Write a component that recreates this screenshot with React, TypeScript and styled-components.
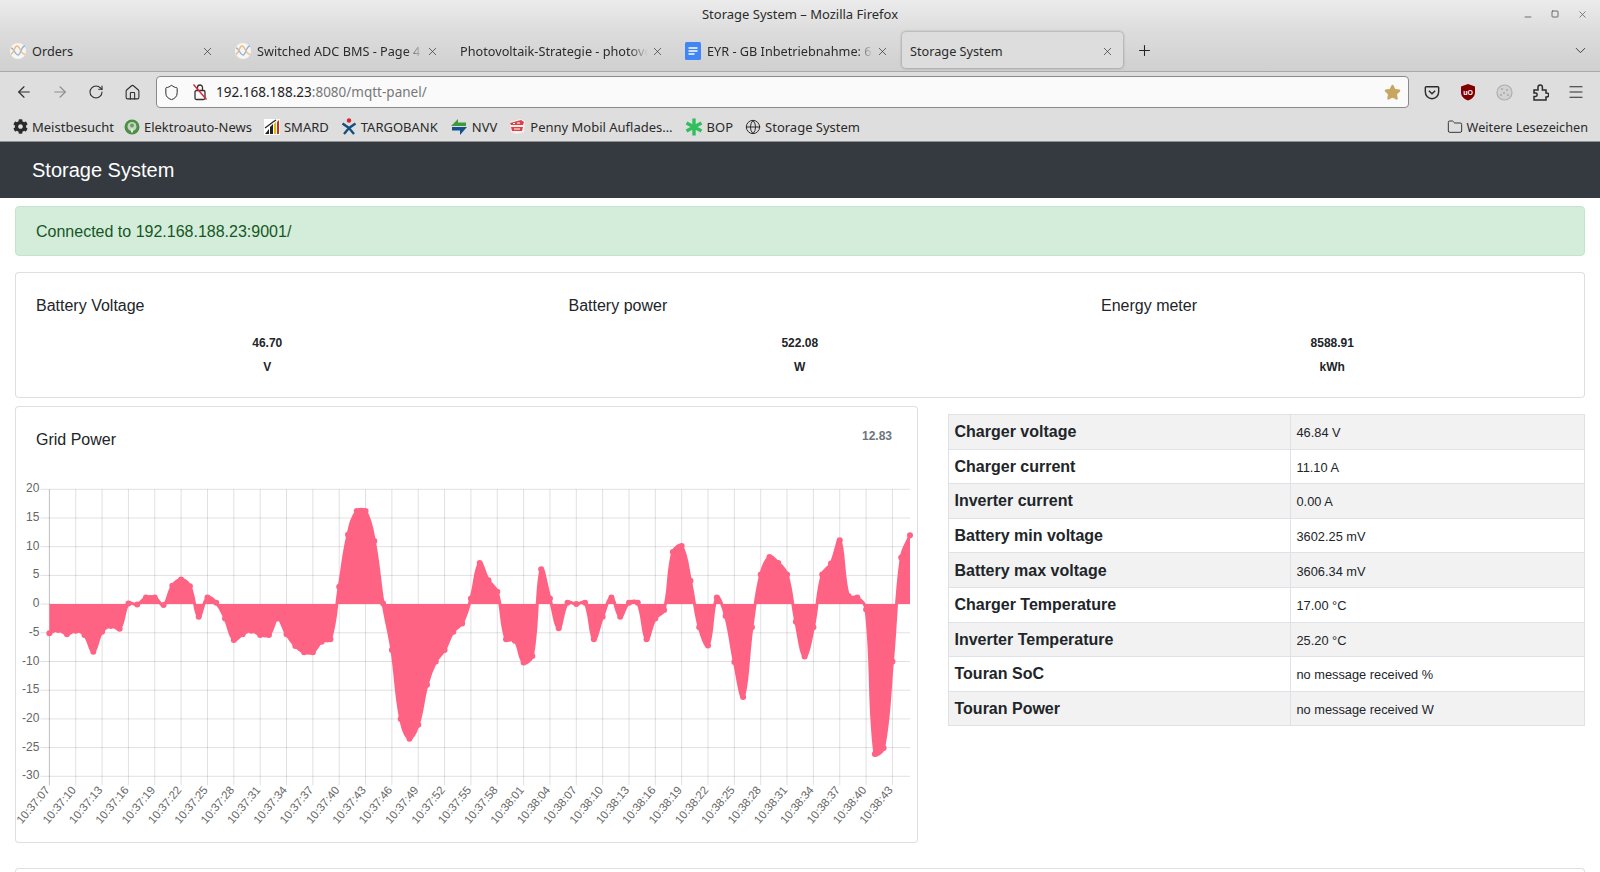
import styled, { createGlobalStyle } from "styled-components";
import {
  ArrowLeft,
  ArrowRight,
  ChevronDown,
  Folder,
  Globe,
  Home,
  Menu,
  Minus,
  Plus,
  RotateCw,
  Shield,
  Square,
  Star,
  X,
} from "lucide-react";
import { FaCog } from "react-icons/fa";

const UI_FONT = `"Noto Sans", "Open Sans", sans-serif`;

const GlobalStyle = createGlobalStyle`
  html, body {
    margin: 0;
    padding: 0;
    height: 872px;
    overflow: hidden;
    background: #fff;
    font-family: "Liberation Sans", Arial, sans-serif;
    color: #212529;
  }
  * { box-sizing: border-box; }
`;

// grid power samples, one per second from 10:37:07
const gridPower = [
  -5.09, -4.51, -5.27, -4.63, -5.38, -8.28, -4.8, -3.82, -4.28, 0.12, -0.06, 1.16, 1.16, -0.17,
  3.18, 4.28, 3.13, -2.2, 1.16, 0.23, -2.49, -6.25, -5.27, -4.63, -5.38, -5.38, -2.49, -5.27,
  -7.29, -8.39, -8.39, -6.54, -6.13, 3.01, 12.09, 16.2, 16.2, 11.0, 0.12, -7.99, -20.02, -23.44,
  -21.0, -14.06, -10.01, -7.99, -4.8, -3.36, 0.98, 7.18, 4.17, 2.14, -6.13, -6.37, -10.19, -9.03,
  6.08, 0.98, -4.22, 0.23, 0, 0.23, -6.13, -2.2, 1.16, -2.2, 0.23, 0.23, -6.13, -2.49, -1.04, 9.09,
  10.13, 4.05, -4.05, -7.23, 1.16, -2.08, -10.07, -16.2, -4.05, 5.15, 8.22, 7.18, 5.15, -3.07,
  -9.14, -4.05, 5.15, 7.06, 11.11, 1.39, 1.16, -0.93, -26.1, -25.06, -10.01, 8.1, 11.98,
];

const CHART_W = 901;
const CHART_H = 372;
const LEFT = 33.4;
const RIGHT = 894;
const TOP = 19.3;
const BOTTOM = 306.3;
const yTicks = [20, 15, 10, 5, 0, -5, -10, -15, -20, -25, -30];

const xAt = (i: number) => LEFT + (i * (RIGHT - LEFT)) / (gridPower.length - 1);
const yAt = (v: number) => TOP + ((20 - v) * (BOTTOM - TOP)) / 50;

function timeLabel(i: number) {
  const total = 37 * 60 + 7 + i;
  const mm = String(Math.floor(total / 60)).padStart(2, "0");
  const ss = String(total % 60).padStart(2, "0");
  return `10:${mm}:${ss}`;
}

// same bezier control points chart.js uses for tension 0.4
function linePath() {
  const pts = gridPower.map((v, i) => ({ x: xAt(i), y: yAt(v) }));
  const ctrl = pts.map((p, i) => {
    const a = pts[Math.max(i - 1, 0)];
    const b = pts[Math.min(i + 1, pts.length - 1)];
    const d1 = Math.hypot(p.x - a.x, p.y - a.y);
    const d2 = Math.hypot(b.x - p.x, b.y - p.y);
    const s = d1 + d2 || 1;
    return {
      inX: p.x - (0.4 * d1 * (b.x - a.x)) / s,
      inY: p.y - (0.4 * d1 * (b.y - a.y)) / s,
      outX: p.x + (0.4 * d2 * (b.x - a.x)) / s,
      outY: p.y + (0.4 * d2 * (b.y - a.y)) / s,
    };
  });
  let d = `M${pts[0].x} ${pts[0].y}`;
  for (let i = 1; i < pts.length; i++) {
    d += ` C${ctrl[i - 1].outX} ${ctrl[i - 1].outY} ${ctrl[i].inX} ${ctrl[i].inY} ${pts[i].x} ${pts[i].y}`;
  }
  return d;
}

function GridChart() {
  const line = linePath();
  const zero = yAt(0);
  const area = `${line} L${RIGHT} ${zero} L${LEFT} ${zero} Z`;
  const xTicks = gridPower.map((_, i) => i).filter((i) => i % 3 === 0 && i < 97);
  return (
    <ChartSvg viewBox={`0 0 ${CHART_W} ${CHART_H}`}>
      {yTicks.map((t) => (
        <g key={t}>
          <line x1={LEFT - 9} x2={RIGHT} y1={yAt(t)} y2={yAt(t)} stroke="rgba(0,0,0,0.12)" />
          <AxisText x={LEFT - 10} y={yAt(t) + 3} textAnchor="end">
            {t}
          </AxisText>
        </g>
      ))}
      {xTicks.map((i) => (
        <g key={i}>
          <line
            x1={xAt(i)}
            x2={xAt(i)}
            y1={TOP}
            y2={BOTTOM + 9}
            stroke={i === 0 ? "rgba(0,0,0,0.25)" : "rgba(0,0,0,0.12)"}
          />
          <TickLabel
            x={xAt(i) + 1}
            y={BOTTOM + 14}
            textAnchor="end"
            transform={`rotate(-50 ${xAt(i) + 1} ${BOTTOM + 14})`}
          >
            {timeLabel(i)}
          </TickLabel>
        </g>
      ))}
      <path d={area} fill="#ff6384" />
      <path d={line} fill="none" stroke="#ff6384" strokeWidth={3} />
      {gridPower.map((v, i) => (
        <circle key={i} cx={xAt(i)} cy={yAt(v)} r={3} fill="#ff6384" />
      ))}
    </ChartSvg>
  );
}

function OrdersIcon() {
  return (
    <svg width="16" height="16" viewBox="0 0 16 16">
      <circle cx="8" cy="8" r="8" fill="#f7f5f0" />
      <path d="M1 5c3 0 4 7 7 7s3-9 7-9" fill="none" stroke="#8fb4dc" strokeWidth="1.3" />
      <path d="M1 11c3 0 3-8 6-8s4 9 8 8" fill="none" stroke="#edb98a" strokeWidth="1.3" />
    </svg>
  );
}

function DocsIcon() {
  return (
    <svg width="16" height="18" viewBox="0 0 16 18">
      <rect width="16" height="18" rx="1.5" fill="#4285f4" />
      <path d="M3.500 6h9M3.500 9h9M3.500 12h6" stroke="#fff" strokeWidth="1.600" />
    </svg>
  );
}

function ElektroIcon() {
  return (
    <svg width="16" height="16" viewBox="0 0 16 16">
      <circle cx="8" cy="8" r="7.5" fill="#4a8f45" />
      <circle cx="8" cy="7.5" r="4.5" fill="#c4d6bd" />
      <circle cx="8" cy="6.5" r="2" fill="#6f9a68" />
      <path d="M7 9.5h2v4H7z" fill="#dcebd6" />
    </svg>
  );
}

function SmardIcon() {
  return (
    <svg width="16" height="16" viewBox="0 0 16 16">
      <rect width="16" height="16" fill="#fff" />
      <path d="M1 15l4-5v5zM6 15V8l3-3v10z" fill="#222" />
      <path d="M10 15V5l2-2v12z" fill="#e8b800" />
      <path d="M13 15V3l2-2v14z" fill="#d62a1e" />
      <path d="M1 9l8-6 3-2" fill="none" stroke="#222" strokeWidth="1.2" />
    </svg>
  );
}

function TargoIcon() {
  return (
    <svg width="16" height="18" viewBox="0 0 16 18">
      <circle cx="8" cy="2.5" r="2.2" fill="#d9232e" />
      <path
        d="M1.5 5.5L8 10l6.500-4.500M3 16l5-6 5 6"
        fill="none"
        stroke="#14507e"
        strokeWidth="2.4"
      />
    </svg>
  );
}

function NvvIcon() {
  return (
    <svg width="18" height="16" viewBox="0 0 18 16">
      <path d="M8 0L1 7h15V3.500H8z" fill="#3f9a3c" />
      <path d="M10 16l7-8H2v3.500h8z" fill="#14508c" />
    </svg>
  );
}

function PennyIcon() {
  return (
    <svg width="17" height="17" viewBox="0 0 17 17">
      <path d="M1 4l10-3 5 2-1 11-7 2-6-2z" fill="#fbeeee" />
      <path d="M1 5l11-3 3 2-1 3H2zM2 9h12l-1 4H3z" fill="#d9444a" />
      <path d="M4 5.500h2M8 5h3M5 11h6" stroke="#fff" strokeWidth="1.100" />
    </svg>
  );
}

function BopIcon() {
  return (
    <svg width="18" height="18" viewBox="0 0 18 18">
      <path d="M9 0.500v17M1.500 5l15 8M16.500 5l-15 8" stroke="#2fbf5b" strokeWidth="3.400" />
    </svg>
  );
}

function LockOffIcon() {
  return (
    <svg width="16" height="18" viewBox="0 0 16 18">
      <rect x="3" y="7.500" width="10" height="9" rx="1.500" fill="none" stroke="#333" strokeWidth="1.300" />
      <path d="M5.500 7.500V4.500a2.500 2.500 0 0 1 5 0v3" fill="none" stroke="#333" strokeWidth="1.300" />
      <path d="M1.500 1.500l13 15" stroke="#e0243a" strokeWidth="1.400" />
    </svg>
  );
}

function PocketIcon() {
  return (
    <svg width="16" height="16" viewBox="0 0 18 18">
      <path
        d="M2.500 3h13a1 1 0 0 1 1 1v5a7.500 7.500 0 0 1-15 0V4a1 1 0 0 1 1-1z"
        fill="none"
        stroke="#2b2b2b"
        strokeWidth="1.600"
      />
      <path d="M5.500 7.500L9 11l3.500-3.500" fill="none" stroke="#2b2b2b" strokeWidth="1.600" />
    </svg>
  );
}

function UblockIcon() {
  return (
    <svg width="18" height="18" viewBox="0 0 18 18">
      <path d="M9 1l7 2.500v6C16 14 12 16.500 9 17.500 6 16.500 2 14 2 9.500v-6z" fill="#800000" />
      <text x="9" y="11.500" textAnchor="middle" fontSize="7" fontWeight="700" fill="#fff" fontFamily="Liberation Sans">
        uO
      </text>
    </svg>
  );
}

function CookieIcon() {
  return (
    <svg width="17" height="17" viewBox="0 0 17 17">
      <circle cx="8.500" cy="8.500" r="7.500" fill="#d2d2d2" stroke="#aeaeae" strokeWidth="1.200" />
      <g fill="#8a8a8a">
        <circle cx="6" cy="5" r="0.800" />
        <circle cx="11" cy="6" r="0.800" />
        <circle cx="8" cy="9" r="0.800" />
        <circle cx="12" cy="11" r="0.800" />
        <circle cx="5" cy="11" r="0.800" />
      </g>
    </svg>
  );
}

function ExtensionsIcon() {
  return (
    <svg width="18" height="18" viewBox="0 0 18 18">
      <path
        d="M3 7h4V4.300a2.200 2.200 0 0 1 4.400 0V7H15v3h.7a2 2 0 0 1 0 4H15v3H3v-3.500h1.500a1.700 1.700 0 0 0 0-3.400H3z"
        fill="none"
        stroke="#2b2b2b"
        strokeWidth="1.500"
      />
    </svg>
  );
}

const tabs = [
  { title: "Orders", icon: <OrdersIcon /> },
  { title: "Switched ADC BMS - Page 4", icon: <OrdersIcon />, fade: true },
  { title: "Photovoltaik-Strategie - photovoltaikforum", fade: true },
  { title: "EYR - GB Inbetriebnahme: 6.4", icon: <DocsIcon />, fade: true },
  { title: "Storage System", active: true },
];

const bookmarks = [
  { title: "Meistbesucht", icon: <FaCog size={15} color="#2b2b2b" /> },
  { title: "Elektroauto-News", icon: <ElektroIcon /> },
  { title: "SMARD", icon: <SmardIcon /> },
  { title: "TARGOBANK", icon: <TargoIcon /> },
  { title: "NVV", icon: <NvvIcon /> },
  { title: "Penny Mobil Auflades…", icon: <PennyIcon /> },
  { title: "BOP", icon: <BopIcon /> },
  { title: "Storage System", icon: <Globe size={16} strokeWidth={1.5} color="#2b2b2b" /> },
];

const stats = [
  { title: "Battery Voltage", value: "46.70", unit: "V" },
  { title: "Battery power", value: "522.08", unit: "W" },
  { title: "Energy meter", value: "8588.91", unit: "kWh" },
];

const readings = [
  ["Charger voltage", "46.84 V"],
  ["Charger current", "11.10 A"],
  ["Inverter current", "0.00 A"],
  ["Battery min voltage", "3602.25 mV"],
  ["Battery max voltage", "3606.34 mV"],
  ["Charger Temperature", "17.00 °C"],
  ["Inverter Temperature", "25.20 °C"],
  ["Touran SoC", "no message received %"],
  ["Touran Power", "no message received W"],
];

export default function App() {
  return (
    <Page>
      <GlobalStyle />
      <Browser>
        <TitleBar>
          <span />
          <WindowTitle>Storage System – Mozilla Firefox</WindowTitle>
          <WindowButtons>
            <Minus size={10} strokeWidth={2} />
            <Square size={8} strokeWidth={2.5} />
            <X size={11} strokeWidth={1.5} />
          </WindowButtons>
        </TitleBar>
        <TabStrip>
          {tabs.map((t) => (
            <Tab key={t.title} $active={t.active}>
              {t.icon}
              <TabTitle $fade={t.fade}>{t.title}</TabTitle>
              <X size={13} strokeWidth={1.3} color="#333" />
            </Tab>
          ))}
          <NewTab>
            <Plus size={17} strokeWidth={1.5} color="#222" />
          </NewTab>
          <TabList>
            <ChevronDown size={17} strokeWidth={1.3} color="#333" />
          </TabList>
        </TabStrip>
        <NavBar>
          <ToolButton>
            <ArrowLeft size={18} strokeWidth={1.5} />
          </ToolButton>
          <ToolButton $muted>
            <ArrowRight size={18} strokeWidth={1.5} />
          </ToolButton>
          <ToolButton>
            <RotateCw size={16} strokeWidth={1.6} />
          </ToolButton>
          <ToolButton>
            <Home size={17} strokeWidth={1.5} />
          </ToolButton>
          <UrlBar>
            <Shield size={17} strokeWidth={1.4} color="#2b2b2b" />
            <LockOffIcon />
            <UrlText>
              192.168.188.23<UrlRest>:8080/mqtt-panel/</UrlRest>
            </UrlText>
            <Star size={17} fill="#c8a662" color="#c8a662" />
          </UrlBar>
          <ToolButton>
            <PocketIcon />
          </ToolButton>
          <ToolButton>
            <UblockIcon />
          </ToolButton>
          <ToolButton>
            <CookieIcon />
          </ToolButton>
          <ToolButton>
            <ExtensionsIcon />
          </ToolButton>
          <ToolButton>
            <Menu size={18} strokeWidth={1.5} />
          </ToolButton>
        </NavBar>
        <BookmarkBar>
          {bookmarks.map((b) => (
            <Bookmark key={b.title}>
              {b.icon}
              <span>{b.title}</span>
            </Bookmark>
          ))}
          <MoreBookmarks>
            <Folder size={16} strokeWidth={1.4} color="#2b2b2b" />
            <span>Weitere Lesezeichen</span>
          </MoreBookmarks>
        </BookmarkBar>
      </Browser>

      <Navbar>Storage System</Navbar>
      <Content>
        <Alert>Connected to 192.168.188.23:9001/</Alert>
        <StatCard>
          <StatRow>
            {stats.map((s) => (
              <StatCol key={s.title}>
                <CardTitle>{s.title}</CardTitle>
                <StatValue>{s.value}</StatValue>
                <StatValue>{s.unit}</StatValue>
              </StatCol>
            ))}
          </StatRow>
        </StatCard>
        <Columns>
          <ChartCard>
            <ChartHead>
              <CardTitle>Grid Power</CardTitle>
              <Latest>12.83</Latest>
            </ChartHead>
            <GridChart />
          </ChartCard>
          <Readings>
            <tbody>
              {readings.map(([name, value]) => (
                <tr key={name}>
                  <th>{name}</th>
                  <td>{value}</td>
                </tr>
              ))}
            </tbody>
          </Readings>
        </Columns>
        <NextCard />
      </Content>
    </Page>
  );
}

const Page = styled.div`
  width: 1600px;
  height: 872px;
  overflow: hidden;
`;

const Browser = styled.header`
  height: 142px;
  background: #dedede;
  border-bottom: 1px solid #8f8f8f;
  font-family: ${UI_FONT};
  font-size: 13px;
  color: #2b2b2b;
`;

const TitleBar = styled.div`
  height: 32px;
  display: grid;
  grid-template-columns: 1fr auto 1fr;
  align-items: center;
  background: linear-gradient(#ececec, #dcdcdc);
`;

const WindowTitle = styled.div`
  font-size: 13px;
  padding-bottom: 5px;
`;

const WindowButtons = styled.div`
  display: flex;
  justify-content: flex-end;
  align-items: center;
  gap: 18px;
  padding-right: 12px;
  padding-bottom: 4px;
  color: #555;

  svg:first-child { margin-top: 6px; }
`;

const TabStrip = styled.div`
  height: 40px;
  display: flex;
  align-items: flex-start;
  padding-left: 2px;
  background: linear-gradient(#dcdcdc, #d0d0d0);
  border-bottom: 1px solid #a9a9a9;
`;

const Tab = styled.div<{ $active?: boolean }>`
  width: 221px;
  height: 36px;
  margin-right: 4px;
  padding: 2px 9px 0 8px;
  display: flex;
  align-items: center;
  gap: 6px;
  border-radius: 4px;
  font-size: 12.700px;
  background: ${(p) => (p.$active ? "#dddddd" : "transparent")};
  box-shadow: ${(p) => (p.$active ? "0 0 3px rgba(0,0,0,0.4)" : "none")};
  svg { flex: none; }
  svg:last-child { margin-left: -3px; }
`;

const TabTitle = styled.span<{ $fade?: boolean }>`
  flex: 1;
  min-width: 0;
  white-space: nowrap;
  overflow: hidden;
  mask-image: ${(p) => (p.$fade ? "linear-gradient(to right, #000 90%, transparent)" : "none")};
`;

const NewTab = styled.div`
  width: 28px;
  height: 36px;
  margin-left: 3px;
  display: flex;
  align-items: center;
  justify-content: center;
`;

const TabList = styled.div`
  margin-left: auto;
  height: 36px;
  padding-right: 11px;
  display: flex;
  align-items: center;
`;

const NavBar = styled.div`
  height: 40px;
  display: flex;
  align-items: center;
  padding: 0 6px;
  background: #dedede;
`;

const ToolButton = styled.div<{ $muted?: boolean }>`
  flex: none;
  width: 36px;
  height: 32px;
  display: flex;
  align-items: center;
  justify-content: center;
  color: ${(p) => (p.$muted ? "#8e8e8e" : "#2b2b2b")};
`;

const UrlBar = styled.div`
  flex: 1;
  height: 32px;
  margin: 0 5px 0 6px;
  padding: 0 7px 0 6px;
  display: flex;
  align-items: center;
  gap: 5px;
  background: #fafafa;
  border: 1px solid #8a8a8a;
  border-radius: 4px;
  svg { flex: none; }
  svg:nth-child(2) { margin-left: 7px; }
`;

const UrlText = styled.div`
  flex: 1;
  font-size: 13.500px;
  color: #1f1f1f;
  padding-left: 3px;
`;

const UrlRest = styled.span`
  color: #777;
`;

const BookmarkBar = styled.div`
  height: 29px;
  display: flex;
  align-items: center;
  padding-left: 13px;
  background: #dedede;
`;

const Bookmark = styled.div`
  display: flex;
  align-items: center;
  gap: 4px;
  margin-right: 12px;
  white-space: nowrap;

  &:first-child { margin-right: 10px; }
`;

const MoreBookmarks = styled(Bookmark)`
  margin-left: auto;
  margin-right: 12px;
  font-size: 12.700px;
`;

const Navbar = styled.div`
  height: 56px;
  padding-left: 32px;
  display: flex;
  align-items: center;
  background: #343a40;
  color: #fff;
  font-size: 20px;
`;

const Content = styled.main`
  padding: 8px 15px 0;
`;

const Alert = styled.div`
  height: 50px;
  padding: 2px 0 0 20px;
  display: flex;
  align-items: center;
  background: #d4edda;
  border: 1px solid #c3e6cb;
  border-radius: 4px;
  color: #155724;
  font-size: 16px;
`;

const Card = styled.section`
  background: #fff;
  border: 1px solid rgba(0, 0, 0, 0.125);
  border-radius: 4px;
`;

const StatCard = styled(Card)`
  height: 126px;
  margin-top: 16px;
  overflow: hidden;
`;

const StatRow = styled.div`
  display: grid;
  grid-template-columns: repeat(3, 532.5px);
  margin-left: -15px;
`;

const StatCol = styled.div`
  padding-top: 23px;
  text-align: center;
`;

const CardTitle = styled.h5`
  margin: 0;
  padding-left: 35px;
  font-size: 16px;
  font-weight: 400;
  line-height: 20px;
  text-align: left;
`;

const StatValue = styled.div`
  font-size: 12px;
  font-weight: 700;
  line-height: 24px;

  ${CardTitle} + & {
    margin-top: 15px;
  }
`;

const Columns = styled.div`
  display: grid;
  grid-template-columns: 903px 1fr;
  column-gap: 30px;
  align-items: start;
  margin-top: 8px;
`;

const ChartCard = styled(Card)`
  height: 437px;
`;

const ChartHead = styled.div`
  height: 63px;
  padding: 23px 25px 0 5px;
  display: flex;
  justify-content: space-between;
  align-items: flex-start;
  ${CardTitle} { padding-left: 15px; }
`;

const Latest = styled.span`
  font-size: 12px;
  font-weight: 700;
  color: #6c757d;
  line-height: 13px;
`;

const ChartSvg = styled.svg`
  display: block;
  width: ${CHART_W}px;
  height: ${CHART_H}px;
`;

const AxisText = styled.text`
  font-family: "Liberation Sans", Arial, sans-serif;
  font-size: 12px;
  fill: #666;
`;

const TickLabel = styled(AxisText)`
  font-size: 11.500px;
`;

const Readings = styled.table`
  width: 100%;
  margin-top: 8px;
  border-collapse: collapse;
  table-layout: fixed;

  tr { height: 34.6px; }
  tr:nth-child(odd) { background: #f2f2f2; }
  th, td {
    padding: 1px 5.500px 0;
    border: 1px solid #dee2e6;
    text-align: left;
  }
  th {
    width: 342px;
    font-size: 16px;
    font-weight: 700;
    color: #212529;
  }
  td { font-size: 12.800px; padding-top: 2px; }
`;

const NextCard = styled(Card)`
  height: 40px;
  margin-top: 25px;
`;
